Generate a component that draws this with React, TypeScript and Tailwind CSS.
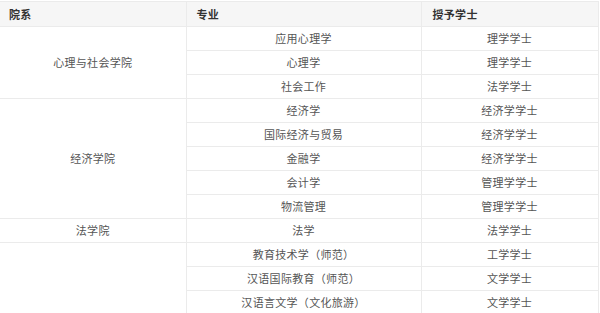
const groups = [
  {
    dept: "心理与社会学院",
    rows: [
      ["应用心理学", "理学学士"],
      ["心理学", "理学学士"],
      ["社会工作", "法学学士"],
    ],
  },
  {
    dept: "经济学院",
    rows: [
      ["经济学", "经济学学士"],
      ["国际经济与贸易", "经济学学士"],
      ["金融学", "经济学学士"],
      ["会计学", "管理学学士"],
      ["物流管理", "管理学学士"],
    ],
  },
  {
    dept: "法学院",
    rows: [["法学", "法学学士"]],
  },
  {
    dept: "",
    rows: [
      ["教育技术学（师范）", "工学学士"],
      ["汉语国际教育（师范）", "文学学士"],
      ["汉语言文学（文化旅游）", "文学学士"],
    ],
  },
];

export default function App() {
  return (
    <div
      className="w-[600px] h-[313px] bg-white overflow-hidden pt-px"
      style={{ fontFamily: '"Noto Sans CJK SC", "Noto Sans", sans-serif' }}
    >
      <table className="w-[598px] border-collapse table-fixed text-[11px] text-[#555] tracking-[0.3px]">
        <colgroup>
          <col className="w-[186px]" />
          <col className="w-[235px]" />
          <col className="w-[177px]" />
        </colgroup>
        <thead>
          <tr className="h-[25px] bg-[#f6f6f6] text-[11px] text-[#333]">
            <th className="border border-[#ebebeb] border-l-0 text-left pl-[9px] font-bold">院系</th>
            <th className="border border-[#ebebeb] text-left pl-[10px] font-bold">专业</th>
            <th className="border border-[#ebebeb] text-left pl-[11px] font-bold">授予学士</th>
          </tr>
        </thead>
        <tbody>
          {groups.map((g) =>
            g.rows.map((r, i) => (
              <tr key={g.dept + r[0]} className="h-[24px]">
                {i === 0 ? (
                  <td
                    rowSpan={g.rows.length}
                    className="border border-[#ebebeb] border-l-0 text-center p-0"
                  >
                    {g.dept}
                  </td>
                ) : null}
                <td className="border border-[#ebebeb] text-center p-0">{r[0]}</td>
                <td className="border border-[#ebebeb] text-center p-0">{r[1]}</td>
              </tr>
            ))
          )}
        </tbody>
      </table>
    </div>
  );
}
